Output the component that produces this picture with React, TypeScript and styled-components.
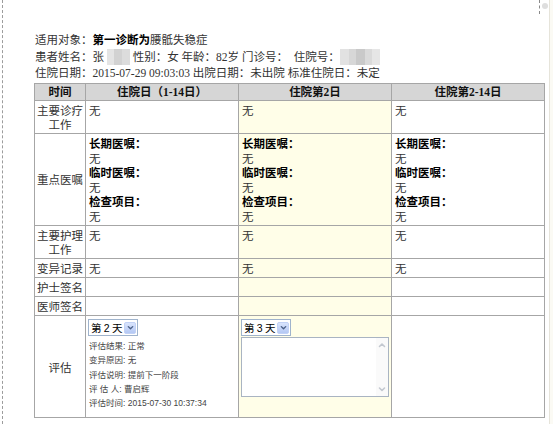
import React from 'react';
import styled, { createGlobalStyle } from 'styled-components';

const GlobalStyle = createGlobalStyle`
  html, body { margin: 0; padding: 0; background: #fff; }
  body {
    font-family: "Liberation Serif", "Noto Sans CJK SC", serif;
    font-size: 11.5px;
    color: #333;
  }
`;

const Page = styled.div`
  display: flex;
  width: 553px;
  height: 424px;
  overflow: hidden;
  padding-left: 2px;
  box-sizing: border-box;
`;

const Frame = styled.div`
  position: relative;
  flex: 1;
  border-left: 1px dashed #9c9c9c;
  padding: 32px 0 0 31px;
`;

const CornerMark = styled.div`
  position: absolute;
  top: 0;
  right: 9px;
  height: 14px;
  border-left: 1px dashed #8a8a8a;
`;

const CornerDot = styled.div`
  position: absolute;
  top: 3px;
  right: 1px;
  width: 6px;
  height: 6px;
  border-radius: 50%;
  background: #dedede;
`;

const Edge = styled.div`
  width: 3px;
  border-left: 1px solid #e6e4da;
  background: #fbfaf4;
`;

const Info = styled.div`
  padding-left: 1px;
  line-height: 16.5px;
  margin-bottom: 1px;
  white-space: nowrap;
`;

const InfoLine = styled.div``;

const Strong = styled.b`
  color: #000;
  font-weight: 700;
`;

const Mosaic = styled.span<{ $w: number; $bg: string }>`
  display: inline-block;
  width: ${p => p.$w}px;
  height: 16px;
  vertical-align: -4px;
  background: ${p => p.$bg};
`;

const Sheet = styled.table`
  width: 511px;
  border-collapse: collapse;
  table-layout: fixed;
  font-size: 11.5px;
  line-height: 14.5px;
`;

const HeadCell = styled.th`
  border: 1px solid #a6a6a6;
  background: #d6d6d6;
  color: #111;
  font-weight: 700;
  text-align: center;
  padding: 1px 2px 0.5px;
  white-space: nowrap;
`;

const LabelCell = styled.td`
  border: 1px solid #a6a6a6;
  background: #fff;
  color: #333;
  text-align: center;
  vertical-align: middle;
  padding: 3px 1px 0.5px;
`;

const Cell = styled.td<{ $yellow?: boolean; $pb?: number }>`
  border: 1px solid #a6a6a6;
  background: ${p => (p.$yellow ? '#fffee8' : '#fff')};
  color: #333;
  vertical-align: top;
  padding: 3px 2px ${p => p.$pb ?? 0.5}px 3px;
`;

const Label = styled.div`
  color: #000;
  font-weight: 700;
`;

const Plain = styled.div``;

const Select = styled.div`
  display: flex;
  align-items: center;
  justify-content: space-between;
  width: 50px;
  height: 17px;
  margin-left: -1px;
  box-sizing: border-box;
  border: 1px solid #9fb3cc;
  background: #fff;
  padding: 0 1px 0 2px;
  font-family: "Liberation Sans", "Noto Sans CJK SC", sans-serif;
  font-size: 10.5px;
  line-height: 14px;
  color: #000;
  white-space: nowrap;
`;

const SelectText = styled.span`
  letter-spacing: -0.3px;
`;

const SelectButton = styled.span`
  display: inline-flex;
  align-items: center;
  justify-content: center;
  width: 12px;
  height: 12px;
  box-sizing: border-box;
  border: 1px solid #c2d2f6;
  border-radius: 2px;
  background: linear-gradient(#d9e4fc, #b4c8f4);
`;

const EvalList = styled.div`
  margin-top: 3px;
  font-family: "Liberation Sans", "Noto Sans CJK SC", sans-serif;
  font-size: 8.5px;
  line-height: 14.3px;
  color: #444;
  white-space: nowrap;
`;

const TextBox = styled.div`
  display: flex;
  width: 148px;
  height: 60px;
  margin: 1px 0 0 -1px;
  box-sizing: border-box;
  border: 1px solid #a9b4c2;
  background: #fff;
`;

const TextArea = styled.div`
  flex: 1;
`;

const ScrollTrack = styled.div`
  width: 12px;
  display: flex;
  flex-direction: column;
  justify-content: space-between;
  align-items: center;
  padding: 3px 0;
  background: #fafafa;
`;

const Chevron = ({ up, color = '#4a5f86', size = 7 }: { up?: boolean; color?: string; size?: number }) => (
  <svg width={size} height={size} viewBox="0 0 8 8">
    <path
      d={up ? 'M1.5 5.5 L4 3 L6.5 5.5' : 'M1.5 3 L4 5.5 L6.5 3'}
      fill="none"
      stroke={color}
      strokeWidth={1.6}
      strokeLinecap="round"
      strokeLinejoin="round"
    />
  </svg>
);

const DaySelect = ({ day }: { day: number }) => (
  <Select>
    <SelectText>第 {day} 天</SelectText>
    <SelectButton>
      <Chevron />
    </SelectButton>
  </Select>
);

const Orders = () => (
  <>
    <Label>长期医嘱：</Label>
    <Plain>无</Plain>
    <Label>临时医嘱：</Label>
    <Plain>无</Plain>
    <Label>检查项目：</Label>
    <Plain>无</Plain>
  </>
);

const mosaicA =
  'linear-gradient(to right, #e4e4e4 0 30%, #d2d2d2 30% 65%, #dcdcdc 65% 100%)';
const mosaicB =
  'linear-gradient(to right, #e2e2e2 0 22%, #d7d7d7 22% 40%, #c9c9c9 40% 62%, #dadada 62% 80%, #e6e6e6 80% 100%)';

export default function App() {
  return (
    <>
      <GlobalStyle />
      <Page>
        <Frame>
          <CornerMark />
          <CornerDot />
          <Info>
            <InfoLine>
              适用对象：<Strong>第一诊断为</Strong>腰骶失稳症
            </InfoLine>
            <InfoLine>
              患者姓名：张 <Mosaic $w={23} $bg={mosaicA} /> 性别：女 年龄：82岁 门诊号：&nbsp; 住院号：
              <Mosaic $w={40} $bg={mosaicB} />
            </InfoLine>
            <InfoLine>
              住院日期：2015-07-29 09:03:03 出院日期：未出院 标准住院日：未定
            </InfoLine>
          </Info>
          <Sheet>
            <colgroup>
              <col style={{ width: 51 }} />
              <col style={{ width: 153 }} />
              <col style={{ width: 153 }} />
              <col style={{ width: 153 }} />
            </colgroup>
            <thead>
              <tr>
                <HeadCell>时间</HeadCell>
                <HeadCell>住院日（1-14日）</HeadCell>
                <HeadCell>住院第2日</HeadCell>
                <HeadCell>住院第2-14日</HeadCell>
              </tr>
            </thead>
            <tbody>
              <tr>
                <LabelCell>主要诊疗工作</LabelCell>
                <Cell>无</Cell>
                <Cell $yellow>无</Cell>
                <Cell>无</Cell>
              </tr>
              <tr>
                <LabelCell>重点医嘱</LabelCell>
                <Cell>
                  <Orders />
                </Cell>
                <Cell $yellow>
                  <Orders />
                </Cell>
                <Cell>
                  <Orders />
                </Cell>
              </tr>
              <tr>
                <LabelCell>主要护理工作</LabelCell>
                <Cell>无</Cell>
                <Cell $yellow>无</Cell>
                <Cell>无</Cell>
              </tr>
              <tr>
                <LabelCell>变异记录</LabelCell>
                <Cell>无</Cell>
                <Cell $yellow>无</Cell>
                <Cell>无</Cell>
              </tr>
              <tr>
                <LabelCell>护士签名</LabelCell>
                <Cell>&nbsp;</Cell>
                <Cell $yellow>&nbsp;</Cell>
                <Cell>&nbsp;</Cell>
              </tr>
              <tr>
                <LabelCell>医师签名</LabelCell>
                <Cell>&nbsp;</Cell>
                <Cell $yellow>&nbsp;</Cell>
                <Cell>&nbsp;</Cell>
              </tr>
              <tr>
                <LabelCell>评估</LabelCell>
                <Cell $pb={7}>
                  <DaySelect day={2} />
                  <EvalList>
                    <div>评估结果: 正常</div>
                    <div>变异原因: 无</div>
                    <div>评估说明: 提前下一阶段</div>
                    <div>评 估 人: 曹启辉</div>
                    <div>评估时间: 2015-07-30 10:37:34</div>
                  </EvalList>
                </Cell>
                <Cell $yellow $pb={7}>
                  <DaySelect day={3} />
                  <TextBox>
                    <TextArea />
                    <ScrollTrack>
                      <Chevron up color="#c3c8d0" size={8} />
                      <Chevron color="#c3c8d0" size={8} />
                    </ScrollTrack>
                  </TextBox>
                </Cell>
                <Cell $pb={7}>&nbsp;</Cell>
              </tr>
            </tbody>
          </Sheet>
        </Frame>
        <Edge />
      </Page>
    </>
  );
}
